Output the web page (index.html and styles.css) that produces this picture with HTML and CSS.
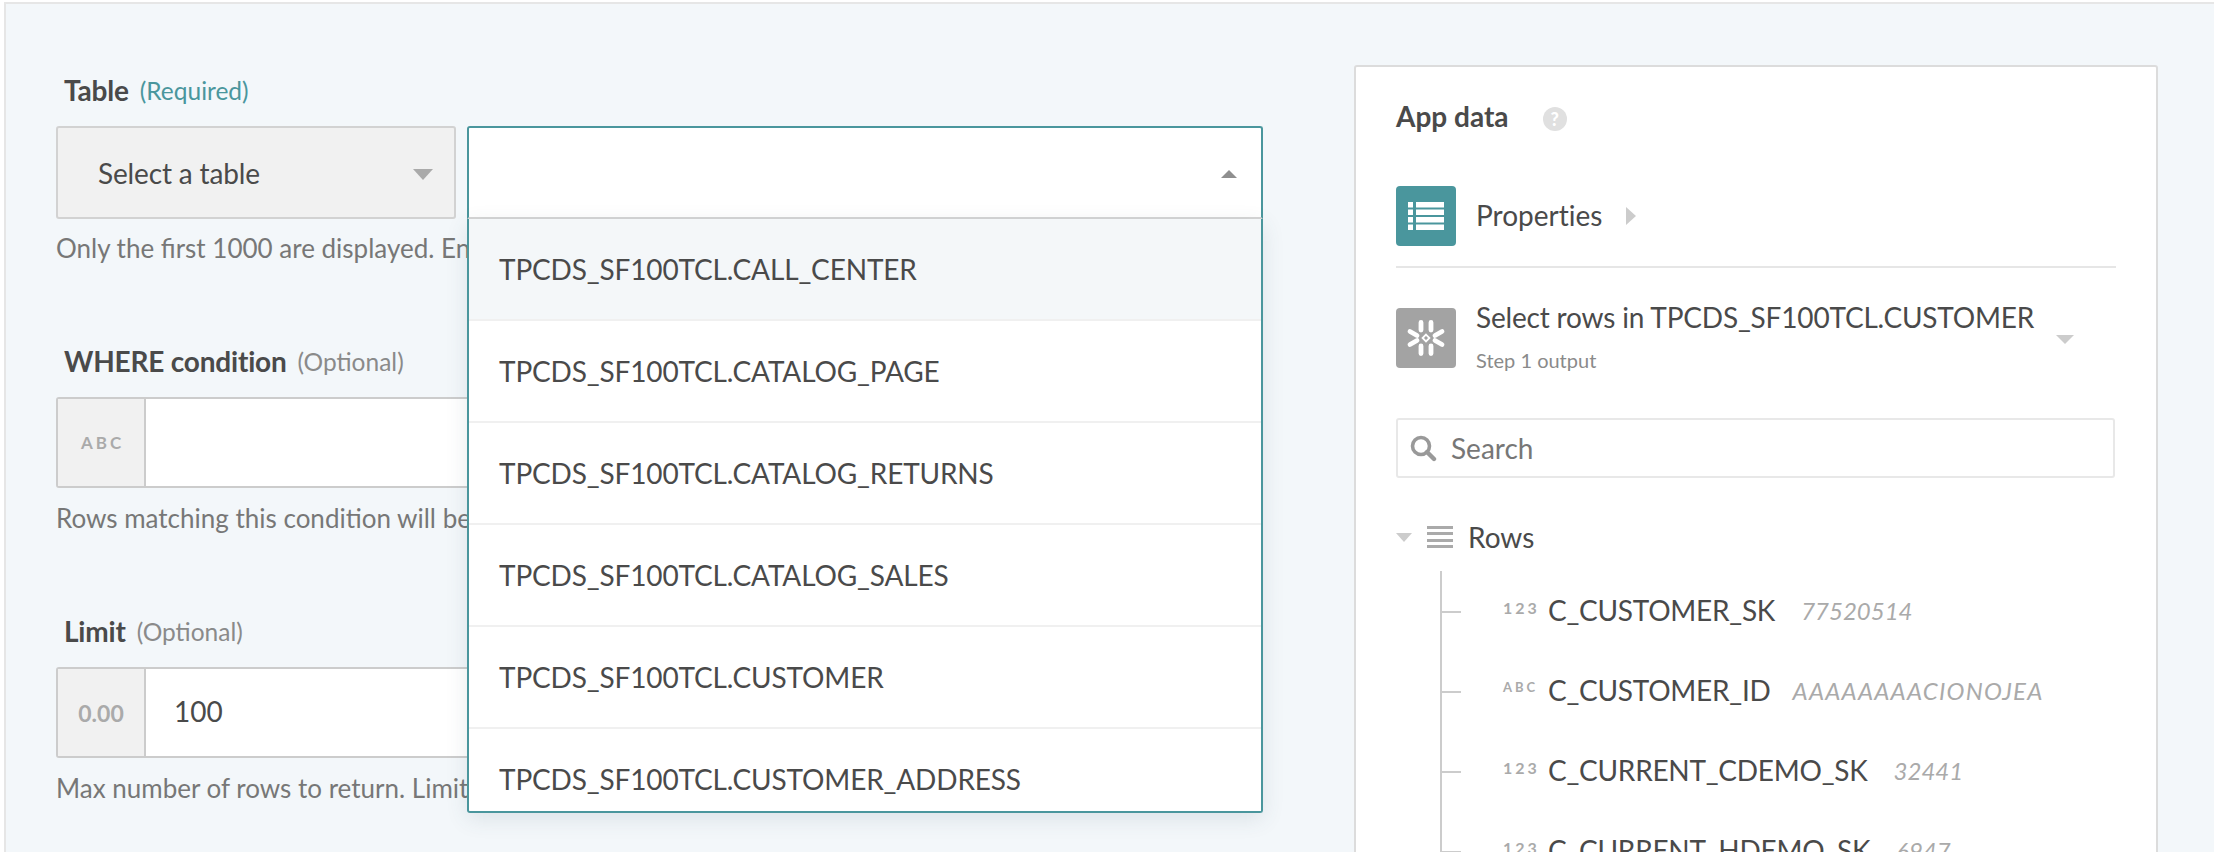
FILE: index.html
```html
<!DOCTYPE html>
<html lang="en">
<head>
<meta charset="utf-8">
<title>Select rows</title>
<link rel="stylesheet" href="styles.css">
</head>
<body>
<div class="page">
  <main class="form">
    <section class="field field-table">
      <div class="label"><b>Table</b><span class="req">(Required)</span></div>
      <div class="table-row">
        <div class="mode-select"><span>Select a table</span><i class="caret-down"></i></div>
        <div class="combo">
          <div class="combo-head"><i class="caret-up"></i></div>
          <ul class="menu">
            <li class="active">TPCDS_SF100TCL.CALL_CENTER</li>
            <li>TPCDS_SF100TCL.CATALOG_PAGE</li>
            <li>TPCDS_SF100TCL.CATALOG_RETURNS</li>
            <li>TPCDS_SF100TCL.CATALOG_SALES</li>
            <li>TPCDS_SF100TCL.CUSTOMER</li>
            <li>TPCDS_SF100TCL.CUSTOMER_ADDRESS</li>
          </ul>
        </div>
      </div>
      <p class="help">Only the first 1000 are displayed. Enter a name</p>
    </section>
    <section class="field field-where">
      <div class="label"><b>WHERE condition</b><span class="opt">(Optional)</span></div>
      <div class="input"><span class="addon abc">ABC</span><span class="value"></span></div>
      <p class="help">Rows matching this condition will be returned</p>
    </section>
    <section class="field field-limit">
      <div class="label"><b>Limit</b><span class="opt">(Optional)</span></div>
      <div class="input"><span class="addon num">0.00</span><span class="value">100</span></div>
      <p class="help">Max number of rows to return. Limit</p>
    </section>
  </main>
  <aside class="card">
    <div class="card-title"><b>App data</b>
      <span class="help-dot">?</span>
    </div>
    <div class="prop-row">
      <span class="tile teal">
        <svg width="36" height="28" viewBox="0 0 36 28"><g fill="#fff"><rect x="0" y="0" width="5" height="5.5"/><rect x="8" y="0" width="28" height="5.5"/><rect x="0" y="7.5" width="5" height="5.5"/><rect x="8" y="7.5" width="28" height="5.5"/><rect x="0" y="15" width="5" height="5.5"/><rect x="8" y="15" width="28" height="5.5"/><rect x="0" y="22.5" width="5" height="5.5"/><rect x="8" y="22.5" width="28" height="5.5"/></g></svg>
      </span>
      <span class="prop-text">Properties</span>
      <i class="caret-right"></i>
    </div>
    <div class="step-row">
      <span class="tile grey">
        <svg width="40" height="40" viewBox="-20 -20 40 40">
          <g fill="none" stroke="#fff" stroke-width="4.8" stroke-linecap="round" stroke-linejoin="round">
            <path d="M-5 -15.5V-8 M5 -15.5V-8 M-5 15.5V8 M5 15.5V8"/>
            <path d="M-16 -6.5L-9 -2.5 M-16 6.5L-9 2.5 M16 -6.5L9 -2.5 M16 6.5L9 2.5"/>
          </g>
          <path d="M0 -3.4L3.4 0L0 3.4L-3.4 0Z" fill="none" stroke="#fff" stroke-width="1.8"/>
        </svg>
      </span>
      <div class="step-text">
        <div class="step-title">Select rows in TPCDS_SF100TCL.CUSTOMER</div>
        <div class="step-sub">Step 1 output</div>
      </div>
      <i class="caret-down small"></i>
    </div>
    <div class="search">
      <svg width="27" height="27" viewBox="0 0 27 27"><circle cx="11" cy="11" r="8.5" fill="none" stroke="#999" stroke-width="3.6"/><path d="M17 17L24 24" stroke="#999" stroke-width="4.4" stroke-linecap="round"/></svg>
      <span>Search</span>
    </div>
    <div class="rows-head">
      <i class="caret-down tiny"></i>
      <span class="rows-ico"><i></i><i></i><i></i><i></i></span>
      <span>Rows</span>
    </div>
    <ul class="tree">
      <li><span class="type">123</span><span class="name">C_CUSTOMER_SK</span><em>77520514</em></li>
      <li><span class="type abc-t">ABC</span><span class="name">C_CUSTOMER_ID</span><em class="wide">AAAAAAAACIONOJEA</em></li>
      <li><span class="type">123</span><span class="name">C_CURRENT_CDEMO_SK</span><em>32441</em></li>
      <li><span class="type">123</span><span class="name">C_CURRENT_HDEMO_SK</span><em>6947</em></li>
    </ul>
  </aside>
</div>
</body>
</html>
```

FILE: styles.css
```css
* { box-sizing: border-box; }
html, body { margin: 0; padding: 0; background: #fff; }
body { font-family: Lato, "Liberation Sans", sans-serif; color: #4a4a4a; overflow: hidden; }
ul { list-style: none; margin: 0; padding: 0; }
p { margin: 0; }
i, em { display: block; }

.page {
  width: 2210px; height: 850px; overflow: hidden;
  margin-top: 2px; margin-left: 4px;
  border-top: 2px solid #e6e6e6; border-left: 2px solid #e6e6e6;
  background: #f3f7fa;
  display: flex; align-items: flex-start;
  padding-left: 50px;
}

.form { width: 1298px; flex: none; }
.field { display: flex; flex-direction: column; }
.field-table { padding-top: 69px; }
.field-where { padding-top: 81px; }
.field-limit { padding-top: 81px; }
.label { height: 34px; padding-left: 8px; display: flex; align-items: center; }
.label b { font-weight: 700; font-size: 28px; letter-spacing: -0.2px; }
.req { font-size: 24.5px; color: #4a969d; margin-left: 11px; }
.opt { font-size: 24.5px; color: #8a8a8a; margin-left: 11px; }
.table-row { margin-top: 19px; display: flex; gap: 11px; position: relative; }
.mode-select {
  width: 400px; height: 93px; padding: 0 21px 0 40px; background: #f1f1f1;
  border: 2px solid #d2d2d2; border-radius: 3px; display: flex; align-items: center;
  justify-content: space-between; font-size: 28px; letter-spacing: -0.15px;
}
.mode-select .caret-down { margin-top: 4px; }
.caret-down { width: 0; height: 0; border: 10px solid transparent; border-top: 11px solid #aaa; border-bottom: 0; }
.caret-up { width: 0; height: 0; border: 8px solid transparent; border-bottom: 8px solid #8f8f8f; border-top: 0; }
.caret-right { width: 0; height: 0; border: 9px solid transparent; border-left: 10px solid #ccc; border-right: 0; }
.combo { width: 796px; position: relative; height: 93px; }
.combo-head {
  height: 93px; background: #fff; border: 2px solid #4a969d; border-bottom: 2px solid #d5d5d5;
  border-radius: 3px 3px 0 0; display: flex; align-items: center; justify-content: flex-end; padding-right: 24px;
  padding-top: 2px;
}
.menu {
  position: absolute; z-index: 5; top: 93px; left: 0; width: 100%; height: 594px; overflow: hidden;
  background: #fff; border: 2px solid #4a969d; border-top: 0; border-radius: 0 0 3px 3px;
  box-shadow: 0 6px 22px rgba(60, 80, 100, .12);
}
.menu li { height: 102px; padding: 0 0 0 30px; display: flex; align-items: center; font-size: 28px; letter-spacing: -0.15px; border-bottom: 2px solid #f0f0f0; }
.menu li.active { background: #f4f7f9; }
.help { margin-top: 14px; font-size: 26px; line-height: 30px; color: #777; white-space: nowrap; }
.field-where .help, .field-limit .help { margin-top: 15px; }
.input { margin-top: 19px; width: 1207px; height: 91px; display: flex; background: #fff; border: 2px solid #ccc; border-radius: 3px; }
.addon { width: 88px; background: #f1f1f1; border-right: 2px solid #ccc; display: flex; align-items: center; justify-content: center; color: #aaa; font-weight: 700; }
.addon.abc { font-size: 17px; letter-spacing: 3px; padding-left: 3px; }
.addon.num { font-size: 23px; }
.value { padding-left: 28px; padding-bottom: 3px; display: flex; align-items: center; font-size: 28px; }

.card {
  width: 804px; height: 900px; flex: none; margin-top: 61px; background: #fff;
  border: 2px solid #dcdcdc; border-radius: 3px; padding: 0 40px;
}
.card-title { height: 36px; margin-top: 31px; display: flex; align-items: center; font-size: 28px; }
.card-title b { font-weight: 700; }
.help-dot { width: 24px; height: 24px; border-radius: 50%; background: #e0e0e0; color: #fff; font-size: 18px; font-weight: 900; display: flex; align-items: center; justify-content: center; margin-left: 34px; margin-top: 6px; }
.prop-row { margin-top: 52px; height: 82px; border-bottom: 2px solid #e6e6e6; display: flex; align-items: flex-start; }
.tile { width: 60px; height: 60px; flex: none; border-radius: 4px; display: flex; align-items: center; justify-content: center; }
.tile.teal { background: #4a969d; }
.tile.grey { background: #a3a3a3; }
.prop-text { font-size: 28px; margin-left: 20px; line-height: 60px; font-variant-ligatures: none; margin-top: -1px; }
.caret-right { margin-left: 24px; margin-top: 21px; }
.step-row { margin-top: 40px; display: flex; align-items: flex-start; position: relative; }
.step-text { margin-left: 20px; }
.step-title { font-size: 28px; line-height: 32px; margin-top: -7px; white-space: nowrap; letter-spacing: -0.18px; }
.step-sub { font-size: 20px; line-height: 24px; color: #8a8a8a; margin-top: 15px; }
.caret-down.small { margin-left: 22px; margin-top: 27px; border-width: 9px; border-top-width: 9px; border-top-color: #ccc; border-bottom: 0; }
.search { margin-top: 46px; width: 719px; height: 60px; border: 2px solid #e8e8e8; border-radius: 3px; display: flex; align-items: center; gap: 14px; padding-left: 12px; font-size: 28px; color: #777; }
.rows-head { margin-top: 42px; height: 34px; display: flex; align-items: center; font-size: 28px; }
.caret-down.tiny { border-width: 8px; border-top-width: 9px; border-top-color: #ccc; }
.rows-ico { width: 26px; height: 22px; margin-left: 15px; margin-right: 15px; display: flex; flex-direction: column; justify-content: space-between; }
.rows-ico i { height: 3px; background: #aaa; }
.tree { margin-left: 44px; margin-top: 17px; border-left: 2px solid #ccc; padding-top: 0; }
.tree li { height: 80px; display: flex; align-items: center; position: relative; padding-left: 61px; padding-bottom: 2px; white-space: nowrap; }
.tree li::before { content: ""; position: absolute; left: 0; top: 40px; width: 19px; height: 2px; background: #ccc; }
.type { width: 45px; font-size: 16px; font-weight: 700; letter-spacing: 3px; color: #aaa; flex: none; margin-top: -6px; }
.type.abc-t { font-size: 13px; }
.name { font-size: 28px; letter-spacing: -0.25px; }
.tree em { font-size: 24px; color: #aaa; font-style: italic; margin-left: 26px; }
.tree em.wide { letter-spacing: 1.2px; margin-left: 22px; }
```
